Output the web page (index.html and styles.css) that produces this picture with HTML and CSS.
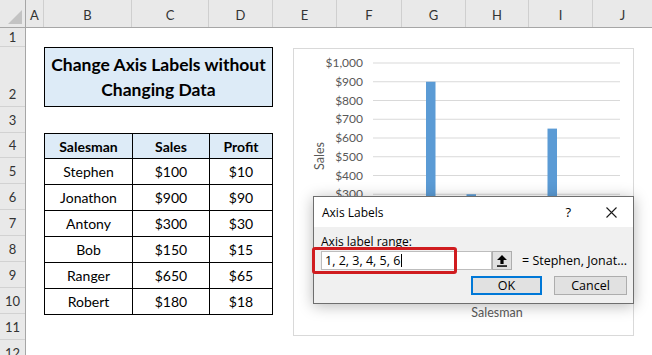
FILE: index.html
```html
<!DOCTYPE html>
<html lang="en">
<head>
  <meta charset="UTF-8">
  <title>Change Axis Labels without Changing Data</title>
  <link rel="stylesheet" href="styles.css">
</head>
<body>
  <div class="sheet">
    <!-- column headers -->
    <div class="col-heads">
      <div class="corner"><span class="corner-tri"></span></div>
      <div class="ch" style="width:18px">A</div>
      <div class="ch" style="width:88px">B</div>
      <div class="ch" style="width:77px">C</div>
      <div class="ch" style="width:64px">D</div>
      <div class="ch" style="width:64px">E</div>
      <div class="ch" style="width:65px">F</div>
      <div class="ch" style="width:64px">G</div>
      <div class="ch" style="width:63px">H</div>
      <div class="ch" style="width:64px">I</div>
      <div class="ch ch-last">J</div>
    </div>

    <div class="sheet-body">
      <div class="row-heads">
        <div class="rh rh-1">1</div>
        <div class="rh rh-2">2</div>
        <div class="rh">3</div>
        <div class="rh rh-4">4</div>
        <div class="rh">5</div>
        <div class="rh">6</div>
        <div class="rh">7</div>
        <div class="rh">8</div>
        <div class="rh">9</div>
        <div class="rh">10</div>
        <div class="rh">11</div>
        <div class="rh">12</div>
      </div>

      <div class="cells">
        <div class="title-box">Change Axis Labels without<br>Changing Data</div>

        <table class="data-table">
          <thead>
            <tr><th>Salesman</th><th>Sales</th><th>Profit</th></tr>
          </thead>
          <tbody>
            <tr><td>Stephen</td><td>$100</td><td>$10</td></tr>
            <tr><td>Jonathon</td><td>$900</td><td>$90</td></tr>
            <tr><td>Antony</td><td>$300</td><td>$30</td></tr>
            <tr><td>Bob</td><td>$150</td><td>$15</td></tr>
            <tr><td>Ranger</td><td>$650</td><td>$65</td></tr>
            <tr><td>Robert</td><td>$180</td><td>$18</td></tr>
          </tbody>
        </table>
      </div>
    </div>

    <!-- chart floating over the sheet -->
    <div class="chart">
      <svg width="339" height="286" viewBox="0 0 339 286">
        <g class="grid">
          <line x1="79" y1="14" x2="326" y2="14"/>
          <line x1="79" y1="32.75" x2="326" y2="32.75"/>
          <line x1="79" y1="51.5" x2="326" y2="51.5"/>
          <line x1="79" y1="70.25" x2="326" y2="70.25"/>
          <line x1="79" y1="89" x2="326" y2="89"/>
          <line x1="79" y1="107.75" x2="326" y2="107.75"/>
          <line x1="79" y1="126.5" x2="326" y2="126.5"/>
          <line x1="79" y1="145.25" x2="326" y2="145.25"/>
          <line x1="79" y1="164" x2="326" y2="164"/>
          <line x1="79" y1="182.75" x2="326" y2="182.75"/>
        </g>
        <!-- lower labels sit under the dialog -->
        <g class="y-labels">
          <text x="69" y="18">$1,000</text>
          <text x="69" y="36.75">$900</text>
          <text x="69" y="55.5">$800</text>
          <text x="69" y="74.25">$700</text>
          <text x="69" y="93">$600</text>
          <text x="69" y="111.75">$500</text>
          <text x="69" y="130.5">$400</text>
          <text x="69" y="149.25">$300</text>
        </g>
        <g class="bars">
          <rect x="91.5" y="183" width="9.5" height="18.75"/>
          <rect x="132" y="32.75" width="9.5" height="168.75"/>
          <rect x="172.5" y="145.25" width="9.5" height="56.25"/>
          <rect x="213" y="173.4" width="9.5" height="28.1"/>
          <rect x="253.5" y="79.6" width="9.5" height="121.9"/>
          <rect x="294" y="167.75" width="9.5" height="33.75"/>
        </g>
        <text class="axis-title" transform="translate(30 107) rotate(-90)">Sales</text>
        <text class="axis-title" x="203" y="268">Salesman</text>
      </svg>
    </div>

    <!-- Axis Labels dialog -->
    <div class="dialog">
      <div class="dlg-title">
        <span class="dlg-name">Axis Labels</span>
        <span class="dlg-help">?</span>
        <svg class="dlg-close" width="11" height="11" viewBox="0 0 11 11">
          <path d="M0.5 0.5 L10.5 10.5 M10.5 0.5 L0.5 10.5" stroke="#1a1a1a" stroke-width="1.1"/>
        </svg>
      </div>
      <div class="dlg-body">
        <div class="dlg-label"><u>A</u>xis label range:</div>
        <div class="range-row">
          <div class="range-input">1, 2, 3, 4, 5, 6<span class="caret"></span></div>
          <div class="collapse-btn">
            <svg width="10" height="12" viewBox="0 0 10 12">
              <polygon points="5,0 10,5 6.6,5 6.6,9 3.4,9 3.4,5 0,5" fill="#000"/>
              <rect x="0" y="10.3" width="10" height="1.5" fill="#000"/>
            </svg>
          </div>
          <div class="range-preview">= Stephen, Jonat...</div>
        </div>
        <div class="btn-row">
          <div class="dlg-btn ok">OK</div>
          <div class="dlg-btn">Cancel</div>
        </div>
        <div class="highlight"></div>
      </div>
    </div>
  </div>
</body>
</html>
```

FILE: styles.css
```css
/* base */
* {
  margin: 0;
  padding: 0;
  box-sizing: border-box;
}

body {
  background: #fff;
  font-family: 'Lato', 'Liberation Sans', sans-serif;
  color: #000;
  overflow: hidden;
}

.sheet {
  position: relative;
  width: 652px;
  height: 355px;
}

/* column headers */
.col-heads {
  display: flex;
  height: 28px;
  background: #e9e9e9;
  border-bottom: 1px solid #a6a6a6;
}

.corner {
  position: relative;
  width: 26px;
  border-right: 1px solid #a6a6a6;
}

.corner-tri {
  position: absolute;
  right: 3px;
  bottom: 3px;
  width: 0;
  height: 0;
  border-left: 14px solid transparent;
  border-bottom: 14px solid #c3c3c3;
}

.ch {
  display: flex;
  align-items: center;
  justify-content: center;
  padding-top: 3px;
  font-size: 13px;
  color: #333;
  border-right: 1px solid #cfcfcf;
}

.ch-last {
  flex: 1;
  border-right: none;
}

/* row headers + cells */
.sheet-body {
  display: flex;
}

.row-heads {
  display: flex;
  flex-direction: column;
  width: 26px;
  background: #e9e9e9;
  border-right: 1px solid #a6a6a6;
}

.rh {
  height: 26px;
  display: flex;
  align-items: flex-end;
  justify-content: center;
  padding-bottom: 4px;
  font-size: 13px;
  color: #333;
  border-bottom: 1px solid #d2d2d2;
}

.rh-1 { height: 19px; padding-bottom: 1px; }
.rh-2 { height: 60px; }
.rh-4 { height: 25px; }

.cells {
  flex: 1;
  display: grid;
  grid-template-columns: 18px 229px 1fr;
  grid-template-rows: 19px 60px 26px 181px;
}

.title-box {
  grid-column: 2;
  grid-row: 2;
  display: flex;
  align-items: center;
  justify-content: center;
  text-align: center;
  background: #ddebf7;
  border: 1px solid #000;
  font-size: 17.5px;
  font-weight: bold;
  line-height: 25px;
}

.data-table {
  grid-column: 2;
  grid-row: 4;
  width: 229px;
  border-collapse: collapse;
  font-size: 14px;
}

.data-table th,
.data-table td {
  border: 1px solid #000;
  text-align: center;
  padding: 0;
  height: 26px;
}

.data-table th {
  height: 25px;
  background: #ddebf7;
  font-weight: bold;
}

.data-table th:nth-child(1) { width: 88px; }
.data-table th:nth-child(2) { width: 77px; }

/* chart */
.chart {
  position: absolute;
  left: 293px;
  top: 48px;
  width: 341px;
  height: 288px;
  background: #fff;
  border: 1px solid #d9d9d9;
}

.chart svg {
  display: block;
}

.grid line {
  stroke: #d9d9d9;
  stroke-width: 1;
}

.y-labels text {
  font-size: 12px;
  fill: #595959;
  text-anchor: end;
}

.bars rect {
  fill: #5b9bd5;
}

.axis-title {
  font-size: 12.5px;
  fill: #595959;
  text-anchor: middle;
}

/* dialog */
.dialog {
  position: absolute;
  left: 313px;
  top: 196px;
  width: 321px;
  height: 108px;
  background: #f0f0f0;
  border: 1px solid #6e6e6e;
  box-shadow: 0 2px 14px rgba(0, 0, 0, 0.28);
  font-family: 'Open Sans', 'Liberation Sans', sans-serif;
  font-size: 12px;
  color: #000;
}

.dlg-title {
  display: flex;
  align-items: center;
  height: 30px;
  padding-left: 8px;
  background: #fff;
}

.dlg-name {
  flex: 1;
}

.dlg-help {
  font-size: 13px;
  margin-right: 35px;
}

.dlg-close {
  margin-right: 16px;
}

.dlg-body {
  position: relative;
  padding: 7px 6px 0 7px;
}

.dlg-label {
  height: 16px;
  line-height: 16px;
}

.range-row {
  display: flex;
  align-items: center;
  margin-top: 1px;
  height: 19px;
}

.range-input {
  display: flex;
  align-items: center;
  width: 177px;
  height: 19px;
  padding-left: 3px;
  background: #fff;
  border: 1px solid #bdbdbd;
  font-size: 12.5px;
}

.caret {
  width: 1px;
  height: 13px;
  margin-left: 1px;
  background: #000;
}

.collapse-btn {
  display: flex;
  align-items: center;
  justify-content: center;
  width: 21px;
  height: 19px;
  background: #e1e1e1;
  border: 1px solid #adadad;
}

.range-preview {
  margin-left: 10px;
  font-size: 12.5px;
  white-space: nowrap;
}

.btn-row {
  display: flex;
  justify-content: flex-end;
  gap: 12px;
  margin-top: 6px;
}

.dlg-btn {
  display: flex;
  align-items: center;
  justify-content: center;
  width: 73px;
  height: 19px;
  background: #e1e1e1;
  border: 1px solid #adadad;
  font-size: 12.5px;
}

.dlg-btn.ok {
  width: 71px;
  border: 2px solid #0078d7;
}

/* red annotation box */
.highlight {
  position: absolute;
  left: -2px;
  top: 20px;
  width: 145px;
  height: 27px;
  border: 3px solid #d01c1f;
  border-radius: 3px;
}
```
